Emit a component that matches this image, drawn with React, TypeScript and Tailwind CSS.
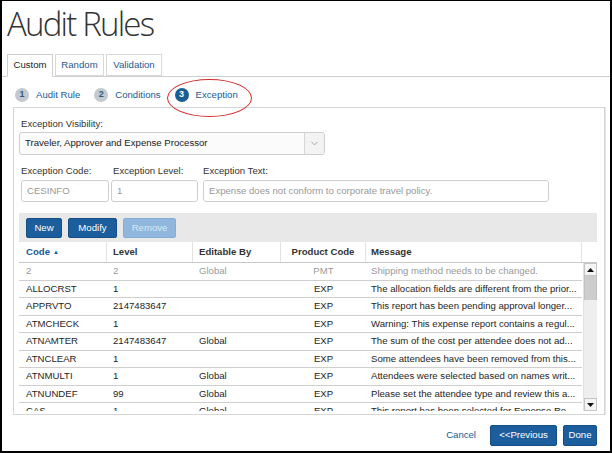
import { ChevronDown } from 'lucide-react';

type Row = {
  code: string;
  level: string;
  editable: string;
  product: string;
  message: string;
  muted?: boolean;
};

const rows: Row[] = [
  { code: '2', level: '2', editable: 'Global', product: 'PMT', message: 'Shipping method needs to be changed.', muted: true },
  { code: 'ALLOCRST', level: '1', editable: '', product: 'EXP', message: 'The allocation fields are different from the prior...' },
  { code: 'APPRVTO', level: '2147483647', editable: '', product: 'EXP', message: 'This report has been pending approval longer...' },
  { code: 'ATMCHECK', level: '1', editable: '', product: 'EXP', message: 'Warning: This expense report contains a regul...' },
  { code: 'ATNAMTER', level: '2147483647', editable: 'Global', product: 'EXP', message: 'The sum of the cost per attendee does not ad...' },
  { code: 'ATNCLEAR', level: '1', editable: '', product: 'EXP', message: 'Some attendees have been removed from this...' },
  { code: 'ATNMULTI', level: '1', editable: 'Global', product: 'EXP', message: 'Attendees were selected based on names writ...' },
  { code: 'ATNUNDEF', level: '99', editable: 'Global', product: 'EXP', message: 'Please set the attendee type and review this a...' },
  { code: 'CAS', level: '1', editable: 'Global', product: 'EXP', message: 'This report has been selected for Expense Re...' },
];

function Step({ n, label, active }: { n: number; label: string; active?: boolean }) {
  return (
    <div className="flex items-center gap-[7px]">
      <span
        className={`w-[14px] h-[14px] rounded-full flex items-center justify-center text-[9px] font-bold ${
          active ? 'bg-[#1b5e92] text-white' : 'bg-[#c3c9cf] text-[#2d5b82]'
        }`}
      >
        {n}
      </span>
      <span className="text-[#1a5a96]">{label}</span>
    </div>
  );
}

function Btn({ children, disabled, className = '' }: { children: string; disabled?: boolean; className?: string }) {
  return (
    <div
      className={`h-[20px] px-[8px] flex items-center justify-center rounded-[2px] border ${
        disabled
          ? 'bg-[#8fb7dd] border-[#86aed4] text-[#dbe8f4]'
          : 'bg-[#1c5e9d] border-[#164f85] text-white'
      } ${className}`}
    >
      {children}
    </div>
  );
}

export default function App() {
  return (
    <div className="relative w-[612px] h-[453px] overflow-hidden bg-white border-black border-t border-x-2 border-b-2 font-['Liberation_Sans',Arial,sans-serif] text-[9.6px] text-[#222]">
      <h1 className="font-['Open_Sans',sans-serif] font-light text-[33px] leading-none tracking-[-1.8px] text-[#333] pl-[5px] pt-[6px]">
        Audit Rules
      </h1>

      {/* tabs */}
      <div className="mt-[15px] pl-[5px] flex items-end border-b border-[#cfcfcf] h-[22px]">
        <div className="h-[23px] -mb-px w-[46px] flex items-center justify-center border border-[#cfcfcf] border-b-white bg-white text-[#222]">
          Custom
        </div>
        <div className="ml-[2px] h-[22px] w-[49px] flex items-center justify-center border border-[#d8d8d8] text-[#1a5a96]">Random</div>
        <div className="ml-[2px] h-[22px] w-[56px] flex items-center justify-center border border-[#d8d8d8] text-[#1a5a96]">Validation</div>
      </div>

      <div className="pl-[11px] pr-[5px]">
        {/* wizard steps */}
        <div className="h-[30px] pt-[6px] pl-[2px] flex items-center gap-[14px]">
          <Step n={1} label="Audit Rule" />
          <Step n={2} label="Conditions" />
          <Step n={3} label="Exception" active />
        </div>

        {/* panel */}
        <div className="border border-[#d6d6d6] shadow-[1px_0_0_#e6e6e6] pl-[5px] pr-[7px] pt-[10px] pb-[3px]">
          <div className="h-[12px] leading-[12px] pl-[2px] text-[#333]">Exception Visibility:</div>
          <div className="mt-[2px] w-[306px] h-[23px] flex border border-[#cfcfcf] rounded-[3px] bg-[#fbfbfb]">
            <div className="flex-1 flex items-center pl-[5px] text-[#222]">Traveler, Approver and Expense Processor</div>
            <div className="w-[20px] flex items-center justify-center border-l border-[#d5d5d5] bg-[#f3f3f3] rounded-r-[3px]">
              <ChevronDown size={11} strokeWidth={1.5} className="text-[#888]" />
            </div>
          </div>

          <div className="mt-[10px] flex text-[#333]">
            <div className="w-[92px] pl-[2px]">
              <div className="h-[12px] leading-[12px]">Exception Code:</div>
              <div className="mt-[3px] w-[88px] h-[22px] border border-[#cfcfcf] rounded-[3px] flex items-center pl-[5px] text-[#999]">
                CESINFO
              </div>
            </div>
            <div className="w-[92px]">
              <div className="h-[12px] leading-[12px] pl-[2px]">Exception Level:</div>
              <div className="mt-[3px] w-[87px] h-[22px] border border-[#cfcfcf] rounded-[3px] flex items-center pl-[5px] text-[#999]">
                1
              </div>
            </div>
            <div className="flex-1">
              <div className="h-[12px] leading-[12px]">Exception Text:</div>
              <div className="mt-[3px] w-[346px] h-[22px] border border-[#cfcfcf] rounded-[3px] flex items-center pl-[5px] text-[#999]">
                Expense does not conform to corporate travel policy.
              </div>
            </div>
          </div>

          {/* toolbar */}
          <div className="mt-[11px] h-[29px] bg-[#e8e8e8] flex items-start pt-[5px] pl-[7px] gap-[6px]">
            <Btn className="w-[36px]">New</Btn>
            <Btn className="w-[49px]">Modify</Btn>
            <Btn disabled className="w-[53px]">Remove</Btn>
          </div>

          {/* grid header */}
          <div className="grid grid-cols-[88px_86px_88px_85px_216px_15px] h-[21px] border-b border-[#c8c8c8] font-bold text-[#333]">
            <div className="flex items-center pl-[7px] border-r border-[#e2e2e2] text-[#1a5a96]">
              Code <span className="ml-[3px] text-[6px]">▲</span>
            </div>
            <div className="flex items-center pl-[6px] border-r border-[#e2e2e2]">Level</div>
            <div className="flex items-center pl-[6px] border-r border-[#e2e2e2]">Editable By</div>
            <div className="flex items-center justify-center border-r border-[#e2e2e2]">Product Code</div>
            <div className="flex items-center pl-[5px] border-r border-[#e2e2e2]">Message</div>
            <div />
          </div>

          {/* grid body */}
          <div className="flex h-[148px]">
            <div className="w-[563px] overflow-hidden">
              {rows.map((r) => (
                <div
                  key={r.code}
                  className={`grid grid-cols-[88px_86px_88px_85px_216px] h-[17.5px] border-b border-[#cfcfcf] items-center ${
                    r.muted ? 'text-[#9a9a9a]' : 'text-[#1e1e1e]'
                  }`}
                >
                  <div className="pl-[7px]">{r.code}</div>
                  <div className="pl-[6px]">{r.level}</div>
                  <div className="pl-[6px]">{r.editable}</div>
                  <div className="text-center">{r.product}</div>
                  <div className="pl-[5px] whitespace-nowrap overflow-hidden">{r.message}</div>
                </div>
              ))}
            </div>
            {/* scrollbar */}
            <div className="ml-[1px] w-[14px] flex flex-col bg-[#eeeeee] border-l border-[#e2e2e2]">
              <div className="h-[13px] flex items-center justify-center bg-[#f4f4f4] border border-[#c6c6c6]">
                <svg width="7" height="4" viewBox="0 0 7 4">
                  <path d="M0 4 L3.5 0 L7 4 Z" fill="#111" />
                </svg>
              </div>
              <div className="h-[24px] bg-[#cdcdcd] border-x border-[#c2c2c2]" />
              <div className="flex-1" />
              <div className="h-[13px] flex items-center justify-center bg-[#f4f4f4] border border-[#c6c6c6]">
                <svg width="7" height="4" viewBox="0 0 7 4">
                  <path d="M0 0 L3.5 4 L7 0 Z" fill="#111" />
                </svg>
              </div>
            </div>
          </div>
        </div>

        {/* footer */}
        <div className="mt-[10px] pr-[8px] flex justify-end items-center gap-[6px]">
          <span className="text-[#1a5a96] mr-[8px]">Cancel</span>
          <Btn className="w-[67px] h-[21px]">&lt;&lt;Previous</Btn>
          <Btn className="w-[34px] h-[21px]">Done</Btn>
        </div>
      </div>

      {/* annotation ellipse */}
      <div className="absolute left-[165px] top-[78px] w-[85px] h-[38px] rounded-[50%] border-[1.5px] border-[#d42a2a]" />
    </div>
  );
}
